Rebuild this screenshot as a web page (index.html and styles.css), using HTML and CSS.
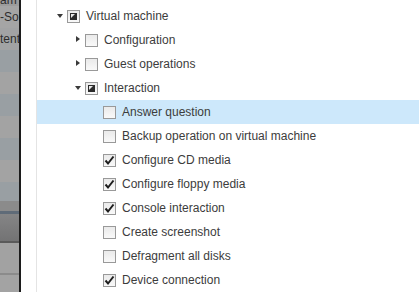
FILE: index.html
```html
<!DOCTYPE html>
<html>
<head>
	<meta charset="utf-8">
	<title>Privileges</title>
	<link rel="stylesheet" href="styles.css">
</head>
<body>
	<div class="page">
		<div class="backdrop">
			<div class="band b0"><span>am</span></div>
			<div class="band b1"><span>-Sol</span></div>
			<div class="band b2"><span>tent</span></div>
			<div class="band b3"></div>
			<div class="band b4"></div>
			<div class="band b3"></div>
			<div class="band b4"></div>
			<div class="band b3"></div>
			<div class="band b4"></div>
			<div class="band b5"></div>
			<div class="band b6"></div>
			<div class="band b7"></div>
			<div class="band b8"></div>
			<div class="band b9"></div>
			<div class="band b10"></div>
			<div class="band b11"></div>
			<div class="band b12"></div>
		</div>
		<div class="dialog">
			<div class="tree">
				<div class="node lv1">
					<span class="toggle open"></span>
					<span class="box partial"><svg width="13" height="13" viewBox="0 0 13 13"><rect x="3" y="3" width="7" height="7" fill="#2b2b2b"/><polygon points="4,4 8,4 4,8" fill="#e8e8e8"/></svg></span>
					<span class="label">Virtual machine</span>
				</div>
				<div class="node lv2">
					<span class="toggle closed"></span>
					<span class="box"></span>
					<span class="label">Configuration</span>
				</div>
				<div class="node lv2">
					<span class="toggle closed"></span>
					<span class="box"></span>
					<span class="label">Guest operations</span>
				</div>
				<div class="node lv2">
					<span class="toggle open"></span>
					<span class="box partial"><svg width="13" height="13" viewBox="0 0 13 13"><rect x="3" y="3" width="7" height="7" fill="#2b2b2b"/><polygon points="4,4 8,4 4,8" fill="#e8e8e8"/></svg></span>
					<span class="label">Interaction</span>
				</div>
				<div class="node lv3 selected">
					<span class="toggle"></span>
					<span class="box"></span>
					<span class="label">Answer question</span>
				</div>
				<div class="node lv3">
					<span class="toggle"></span>
					<span class="box"></span>
					<span class="label">Backup operation on virtual machine</span>
				</div>
				<div class="node lv3">
					<span class="toggle"></span>
					<span class="box checked"><svg width="13" height="13" viewBox="0 0 13 13"><path d="M2.5 6.5 L5 9.5 L10.5 2.5" fill="none" stroke="#1e1e1e" stroke-width="2"/></svg></span>
					<span class="label">Configure CD media</span>
				</div>
				<div class="node lv3">
					<span class="toggle"></span>
					<span class="box checked"><svg width="13" height="13" viewBox="0 0 13 13"><path d="M2.5 6.5 L5 9.5 L10.5 2.5" fill="none" stroke="#1e1e1e" stroke-width="2"/></svg></span>
					<span class="label">Configure floppy media</span>
				</div>
				<div class="node lv3">
					<span class="toggle"></span>
					<span class="box checked"><svg width="13" height="13" viewBox="0 0 13 13"><path d="M2.5 6.5 L5 9.5 L10.5 2.5" fill="none" stroke="#1e1e1e" stroke-width="2"/></svg></span>
					<span class="label">Console interaction</span>
				</div>
				<div class="node lv3">
					<span class="toggle"></span>
					<span class="box"></span>
					<span class="label">Create screenshot</span>
				</div>
				<div class="node lv3">
					<span class="toggle"></span>
					<span class="box"></span>
					<span class="label">Defragment all disks</span>
				</div>
				<div class="node lv3">
					<span class="toggle"></span>
					<span class="box checked"><svg width="13" height="13" viewBox="0 0 13 13"><path d="M2.5 6.5 L5 9.5 L10.5 2.5" fill="none" stroke="#1e1e1e" stroke-width="2"/></svg></span>
					<span class="label">Device connection</span>
				</div>
			</div>
		</div>
	</div>
</body>
</html>
```

FILE: styles.css
```css
*{
	padding:0;
	margin:0;
	box-sizing: border-box;
}
body{
	font-family: "Liberation Sans", Arial, sans-serif;
	font-size: 12px;
	color: #333;
	overflow: hidden;
}
.page{
	display: flex;
	height: 292px;
}
.backdrop{
	width: 19px;
	overflow: hidden;
	white-space: nowrap;
}
.band{
	height: 22px;
	line-height: 22px;
	color: #2e2e2e;
	font-size: 12px;
}
.band span{
	display: block;
}
.b0{ height: 6px; line-height: 0; background: #9c9c9c; }
.b1{ background: #a5a5a5; }
.b2{ background: #a2a3a4; }
.b3{ background: #999fa3; }
.b4{ background: #a3a3a3; }
.b5{ height: 19px; background: #999fa3; }
.b6{ height: 10px; background: #8b8b8b; }
.b7{ height: 3px; background: #5f6b78; }
.b8{ height: 27px; background: linear-gradient(#858586, #737374); }
.b9{ height: 2px; background: #5a5a5a; }
.b10{ height: 30px; background: #a2a2a2; }
.b11{ height: 2px; background: #8b8b8b; }
.b12{ height: 20px; background: #a3a3a3; }
.dialog{
	flex: 1;
	background: #fff;
	border-left: 2px solid #1c1c1c;
	padding-left: 15px;
}
.tree{
	height: 100%;
	border-left: 1px solid #e4e4e4;
	padding-top: 4px;
}
.node{
	display: flex;
	align-items: center;
	height: 24px;
	white-space: nowrap;
}
.lv1{ padding-left: 18px; }
.lv2{ padding-left: 36px; }
.lv3{ padding-left: 54px; }
.selected{
	background: #cde8fb;
}
.toggle{
	width: 10px;
	height: 10px;
	margin-right: 2px;
	position: relative;
}
.toggle.open::after{
	content: "";
	position: absolute;
	left: 2px;
	top: 3px;
	border-left: 3px solid transparent;
	border-right: 3px solid transparent;
	border-top: 4px solid #3a3a3a;
}
.toggle.closed::after{
	content: "";
	position: absolute;
	left: 3px;
	top: 1px;
	border-top: 3px solid transparent;
	border-bottom: 3px solid transparent;
	border-left: 4px solid #3a3a3a;
}
.box{
	width: 13px;
	height: 13px;
	border: 1px solid #999;
	background: linear-gradient(#eaeaea, #f9f9f9);
	margin-right: 6px;
	position: relative;
}
.box svg{
	position: absolute;
	left: -1px;
	top: -1px;
}
.label{
	color: #3c3c3c;
}
```
